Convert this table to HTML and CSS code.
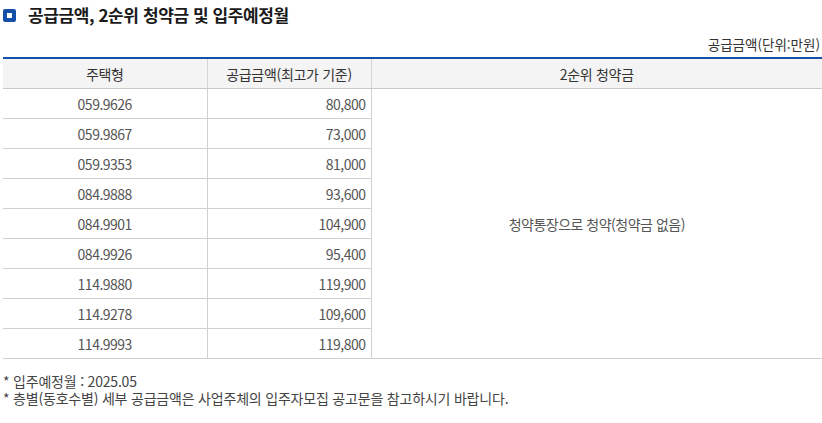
FILE: index.html
```html
<!DOCTYPE html>
<html lang="ko">
<head>
    <meta charset="UTF-8">
    <meta name="viewport" content="width=device-width, initial-scale=1.0">
    <title>공급금액, 2순위 청약금 및 입주예정월</title>
    <link rel="stylesheet" href="styles.css">
</head>
<body>
    <div class="section">
        <h3 class="title"><span class="bullet"></span>공급금액, 2순위 청약금 및 입주예정월</h3>
        <div class="unit">공급금액(단위:만원)</div>
        <table class="price-table">
            <colgroup>
                <col class="c1">
                <col class="c2">
                <col class="c3">
            </colgroup>
            <thead>
                <tr>
                    <th>주택형</th>
                    <th>공급금액(최고가 기준)</th>
                    <th>2순위 청약금</th>
                </tr>
            </thead>
            <tbody>
                <tr><td>059.9626</td><td class="num">80,800</td><td rowspan="9">청약통장으로 청약(청약금 없음)</td></tr>
                <tr><td>059.9867</td><td class="num">73,000</td></tr>
                <tr><td>059.9353</td><td class="num">81,000</td></tr>
                <tr><td>084.9888</td><td class="num">93,600</td></tr>
                <tr><td>084.9901</td><td class="num">104,900</td></tr>
                <tr><td>084.9926</td><td class="num">95,400</td></tr>
                <tr><td>114.9880</td><td class="num">119,900</td></tr>
                <tr><td>114.9278</td><td class="num">109,600</td></tr>
                <tr><td>114.9993</td><td class="num">119,800</td></tr>
            </tbody>
        </table>
        <ul class="notes">
            <li>* 입주예정월 : 2025.05</li>
            <li>* 층별(동호수별) 세부 공급금액은 사업주체의 입주자모집 공고문을 참고하시기 바랍니다.</li>
        </ul>
    </div>
</body>
</html>
```

FILE: styles.css
```css
body {
    margin: 0;
    font-family: "Noto Sans CJK KR", "Noto Sans", sans-serif;
    color: #555;
    background-color: #fff;
}

.section {
    padding-left: 3px;
}

.title {
    display: flex;
    align-items: center;
    margin: 0;
    height: 29px;
    font-size: 17px;
    font-weight: bold;
    color: #1a1a1a;
    letter-spacing: -0.4px;
}

.bullet {
    display: inline-block;
    box-sizing: border-box;
    flex-shrink: 0;
    width: 13px;
    height: 13px;
    border: 4px solid #1450a8;
    border-radius: 2px;
    margin-right: 12px;
    margin-top: 1px;
}

.unit {
    text-align: right;
    font-size: 13.5px;
    color: #333;
    height: 28px;
    line-height: 31px;
    padding-right: 2px;
}

.price-table {
    width: 819px;
    border-collapse: collapse;
    table-layout: fixed;
    border-top: 2px solid #1450a8;
    font-size: 14px;
}

.c1 { width: 204px; }
.c2 { width: 164px; }

.price-table th {
    height: 29px;
    padding: 0;
    background-color: #f4f4f4;
    font-weight: normal;
    color: #333;
    border-bottom: 1px solid #c8c8c8;
    border-left: 1px solid #d6d6d6;
    letter-spacing: -0.3px;
}

.price-table td {
    height: 29px;
    padding: 0 5px;
    text-align: center;
    border-bottom: 1px solid #d0d0d0;
    border-left: 1px solid #d0d0d0;
    letter-spacing: -0.5px;
}

.price-table th:first-child,
.price-table tr td:first-child {
    border-left: none;
}

.price-table td[rowspan] {
    border-left: 1px solid #d0d0d0;
}

.price-table td.num {
    text-align: right;
}

.notes {
    list-style: none;
    margin: 14px 0 0;
    padding: 0;
    font-size: 14px;
    color: #444;
    line-height: 17px;
    letter-spacing: -0.2px;
}
```
